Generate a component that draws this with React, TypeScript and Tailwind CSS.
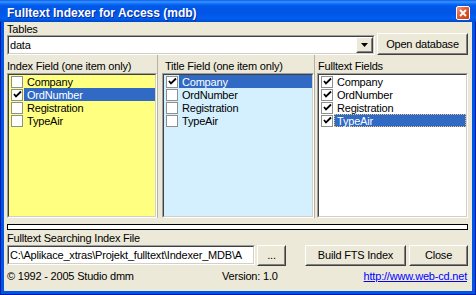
import React from 'react';

const fields = ['Company', 'OrdNumber', 'Registration', 'TypeAir'];

// classic 3D borders
const sunkenOuter = 'border border-t-[#A0A0A0] border-l-[#A0A0A0] border-b-white border-r-white';
const sunkenInner = 'border border-t-[#404040] border-l-[#404040] border-b-[#D4D0C8] border-r-[#D4D0C8]';

const Raised: React.FC<{ className?: string; children?: React.ReactNode }> = ({ className = '', children }) => (
  <div className={`flex border border-t-white border-l-white border-b-[#404040] border-r-[#404040] ${className}`}>
    <div className="flex flex-1 items-center justify-center border border-t-[#ECE9D8] border-l-[#ECE9D8] border-b-[#808080] border-r-[#808080] bg-[#ECE9D8]">
      {children}
    </div>
  </div>
);

const CheckBox: React.FC<{ checked: boolean }> = ({ checked }) => (
  <div className="w-[12px] h-[12px] shrink-0 border border-[#8E8F8F] bg-white flex items-center justify-center">
    {checked && (
      <svg width="9" height="9" viewBox="0 0 9 9">
        <polyline points="1,4 3,6.5 8,1.5" fill="none" stroke="#000" strokeWidth="1.8" />
      </svg>
    )}
  </div>
);

type ListProps = {
  bg: string;
  checked: boolean[];
  selected: number;
  focus?: boolean;
};

const CheckList: React.FC<ListProps> = ({ bg, checked, selected, focus }) => (
  <div className={`flex flex-1 ${sunkenOuter}`}>
    <div className={`flex-1 ${sunkenInner} ${bg}`}>
      {fields.map((name, i) => (
        <div key={name} className="h-[13px] flex items-center pl-[2px]">
          <CheckBox checked={checked[i]} />
          <div
            className={`ml-[1px] h-[13px] flex-1 pl-[2px] leading-[12px] whitespace-nowrap ${
              i === selected ? 'bg-[#316AC5] text-white' : ''
            } ${i === selected && focus ? 'border border-dotted border-[#E8C070]' : 'border border-transparent'}`}
          >
            {name}
          </div>
        </div>
      ))}
    </div>
  </div>
);

export default function App() {
  return (
    <div className="w-[476px] h-[295px] flex flex-col bg-[#0055E5] border-x border-b border-[#0019A8] font-['Liberation_Sans',Arial,sans-serif] text-[11px] tracking-[-0.2px] text-black">
      {/* Title bar */}
      <div className="h-[22px] -mx-px flex items-start pl-[7px] pr-[6px] bg-[linear-gradient(180deg,#0A5DE8_0%,#3D95FF_9%,#1478FD_15%,#0059E8_26%,#0055E5_60%,#005FF2_82%,#0052D8_94%,#0045BC_100%)]">
        <span className="mt-[6px] leading-[14px] text-[12px] tracking-normal font-bold text-white [text-shadow:1px_1px_0_#0A2A9A]">
          Fulltext Indexer for Access (mdb)
        </span>
        <div className="ml-auto mt-[6px] w-[14px] h-[14px] rounded-[2px] border border-white bg-[linear-gradient(135deg,#F29A7E_0%,#E25A32_45%,#C63B12_100%)] flex items-center justify-center">
          <svg width="8" height="8" viewBox="0 0 8 8">
            <path d="M1 1 L7 7 M7 1 L1 7" stroke="#fff" strokeWidth="1.8" />
          </svg>
        </div>
      </div>

      {/* Client area */}
      <div className="flex-1 mx-[3px] mb-[3px] bg-[#ECE9D8] pl-[3px] pr-[4px] flex flex-col">
        <div className="mt-[2px] h-[11px] leading-[11px]">Tables</div>
        <div className="-mt-[2px] h-[22px] flex">
          <div className={`self-end w-[368px] h-[20px] flex ${sunkenOuter}`}>
            <div className={`flex flex-1 bg-white ${sunkenInner}`}>
              <div className="flex-1 pl-[1px] leading-[16px]">data</div>
              <Raised className="w-[17px]">
                <svg width="7" height="4" viewBox="0 0 7 4">
                  <path d="M0 0 H7 L3.5 4 Z" fill="#000" />
                </svg>
              </Raised>
            </div>
          </div>
          <Raised className="ml-[2px] w-[91px] h-[22px]">Open database</Raised>
        </div>

        {/* Field panels */}
        <div className="mt-[5px] h-[158px] flex">
          <div className="w-[150px] flex flex-col">
            <div className="h-[13px] leading-[12px] whitespace-nowrap">Index Field (one item only)</div>
            <CheckList bg="bg-[#FFFF80]" checked={[false, true, false, false]} selected={1} />
          </div>
          <div className="w-[5px] -mt-[5px] border-l border-[#B5B2A3]" />
          <div className="w-[152px] flex flex-col">
            <div className="h-[13px] leading-[12px] pl-[3px] whitespace-nowrap">Title Field (one item only)</div>
            <CheckList bg="bg-[#D4F0FF]" checked={[true, false, false, false]} selected={0} />
          </div>
          <div className="w-[3px] -mt-[5px] border-l border-[#B5B2A3]" />
          <div className="flex-1 flex flex-col">
            <div className="h-[13px] leading-[12px] pl-[1px] whitespace-nowrap">Fulltext Fields</div>
            <CheckList bg="bg-white" checked={[true, true, true, true]} selected={3} focus />
          </div>
        </div>

        {/* Progress bar */}
        <div className="mt-[6px] h-[6px] border border-black bg-white" />

        <div className="mt-[2px] h-[12px] leading-[12px]">Fulltext Searching Index File</div>
        <div className="mt-[1px] h-[21px] flex">
          <div className={`w-[248px] h-[20px] flex ${sunkenOuter}`}>
            <div className={`flex-1 bg-white overflow-hidden whitespace-nowrap pl-[1px] leading-[16px] ${sunkenInner}`}>
              C:\Aplikace_xtras\Projekt_fulltext\Indexer_MDB\A
            </div>
          </div>
          <Raised className="ml-[2px] w-[29px] h-[21px]">...</Raised>
          <Raised className="ml-[19px] w-[101px] h-[21px]">Build FTS Index</Raised>
          <Raised className="ml-[3px] w-[59px] h-[21px]">Close</Raised>
        </div>

        <div className="mt-[4px] h-[12px] leading-[12px] flex whitespace-nowrap">
          <span className="w-[215px]">© 1992 - 2005 Studio dmm</span>
          <span>Version: 1.0</span>
          <a href="#" className="ml-auto mr-[1px] text-[#0000FF] underline">
            http://www.web-cd.net
          </a>
        </div>
      </div>
    </div>
  );
}
